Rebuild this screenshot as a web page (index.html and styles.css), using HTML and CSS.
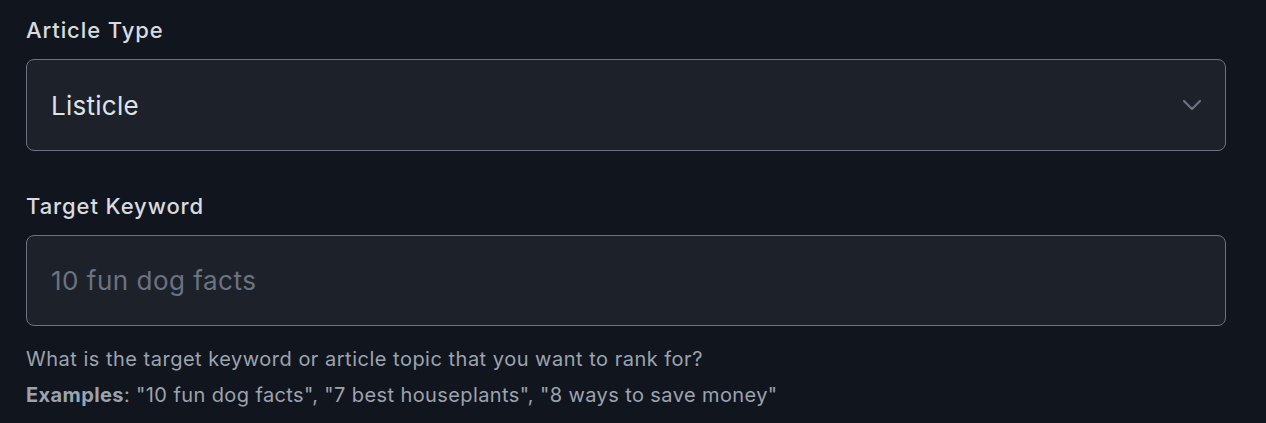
FILE: index.html
```html
<!DOCTYPE html>
<html>
<head>
<meta charset="utf-8">
<link rel="stylesheet" href="styles.css">
</head>
<body>
<div class="form">
  <div class="group">
    <label class="label">Article Type</label>
    <div class="select">
      <span class="value">Listicle</span>
      <svg class="chev" width="20" height="12" viewBox="0 0 20 12"><path d="M2 2 L10 10 L18 2" fill="none" stroke="#6b7280" stroke-width="2.2" stroke-linecap="round" stroke-linejoin="round"/></svg>
    </div>
  </div>
  <div class="group group2">
    <label class="label">Target Keyword</label>
    <div class="input"><span class="placeholder">10 fun dog facts</span></div>
    <p class="help help1">What is the target keyword or article topic that you want to rank for?</p>
    <p class="help help2"><b>Examples</b>: "10 fun dog facts", "7 best houseplants", "8 ways to save money"</p>
  </div>
</div>
</body>
</html>
```
FILE: styles.css
```css
html, body { margin: 0; padding: 0; background: #11161e; }
body { font-family: Inter, "Noto Sans", sans-serif; }
.form { padding: 15px 26px 0 26px; width: 1200px; }
.label { display: block; font-size: 22px; line-height: 30px; font-weight: 500; color: #d8dbe0; margin-bottom: 14px; letter-spacing: 0.9px; }
.select, .input {
  box-sizing: border-box; height: 92px; border: 1px solid #6b7280; border-radius: 8px;
  background: #1d222a; display: flex; align-items: center; justify-content: space-between;
  padding: 0 23px 0 24px;
}
.input { height: 91px; }
.value { font-size: 26px; color: #dfe2e6; letter-spacing: 0.25px; }
.placeholder { font-size: 26px; color: #6b7280; letter-spacing: 0.5px; }
.chev { display: block; }
.group2 { margin-top: 40px; }
.help { margin: 0; font-size: 20px; line-height: 28px; color: #9ca3af; letter-spacing: 0.5px; }
.help1 { margin-top: 19px; }
.help2 { margin-top: 8px; letter-spacing: 0.4px; }
.help b { font-weight: 700; }
```
